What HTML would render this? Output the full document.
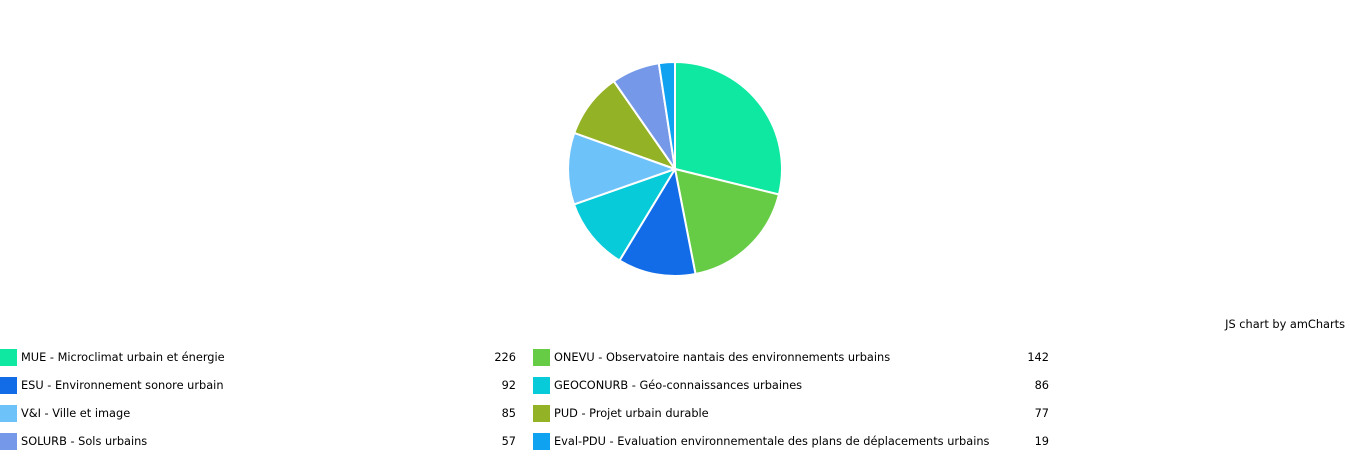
<!DOCTYPE html>
<html><head><meta charset="utf-8"><style>
body{margin:0;width:1350px;height:470px;background:#fff;font-family:"DejaVu Sans",Verdana,sans-serif;font-size:11.35px;color:#000;position:relative;overflow:hidden}
.sw{position:absolute;width:17px;height:17px}
.t{position:absolute;white-space:nowrap;line-height:17px}
.v{position:absolute;text-align:right;width:60px;line-height:17px}
</style></head><body>
<svg width="1350" height="320" style="position:absolute;left:0;top:0">
<g stroke="#fff" stroke-width="2" stroke-linejoin="round">
<path d="M675,169 L675,62 A107,107 0 0 1 778.9,194.5 Z" fill="#0fe8a0"/>
<path d="M675,169 L778.9,194.5 A107,107 0 0 1 695.5,274 Z" fill="#67cc45"/>
<path d="M675,169 L695.5,274 A107,107 0 0 1 619.5,260.5 Z" fill="#126ce8"/>
<path d="M675,169 L619.5,260.5 A107,107 0 0 1 574,204.4 Z" fill="#07cbd8"/>
<path d="M675,169 L574,204.4 A107,107 0 0 1 574.3,132.9 Z" fill="#6ec2fa"/>
<path d="M675,169 L574.3,132.9 A107,107 0 0 1 613.8,81.2 Z" fill="#94b225"/>
<path d="M675,169 L613.8,81.2 A107,107 0 0 1 658.8,63.2 Z" fill="#7599e8"/>
<path d="M675,169 L658.8,63.2 A107,107 0 0 1 675,62 Z" fill="#0ea2f0"/>
</g></svg>
<div class="t" style="right:5px;top:316px">JS chart by amCharts</div>

<div class="sw" style="left:0;top:349px;background:#0fe8a0"></div><div class="t" style="left:21px;top:349px">MUE - Microclimat urbain et énergie</div><div class="v" style="left:456px;top:349px">226</div>
<div class="sw" style="left:533px;top:349px;background:#67cc45"></div><div class="t" style="left:554px;top:349px">ONEVU - Observatoire nantais des environnements urbains</div><div class="v" style="left:989px;top:349px">142</div>

<div class="sw" style="left:0;top:377px;background:#126ce8"></div><div class="t" style="left:21px;top:377px">ESU - Environnement sonore urbain</div><div class="v" style="left:456px;top:377px">92</div>
<div class="sw" style="left:533px;top:377px;background:#07cbd8"></div><div class="t" style="left:554px;top:377px">GEOCONURB - Géo-connaissances urbaines</div><div class="v" style="left:989px;top:377px">86</div>

<div class="sw" style="left:0;top:405px;background:#6ec2fa"></div><div class="t" style="left:21px;top:405px">V&amp;I - Ville et image</div><div class="v" style="left:456px;top:405px">85</div>
<div class="sw" style="left:533px;top:405px;background:#94b225"></div><div class="t" style="left:554px;top:405px">PUD - Projet urbain durable</div><div class="v" style="left:989px;top:405px">77</div>

<div class="sw" style="left:0;top:433px;background:#7599e8"></div><div class="t" style="left:21px;top:433px">SOLURB - Sols urbains</div><div class="v" style="left:456px;top:433px">57</div>
<div class="sw" style="left:533px;top:433px;background:#0ea2f0"></div><div class="t" style="left:554px;top:433px">Eval-PDU - Evaluation environnementale des plans de déplacements urbains</div><div class="v" style="left:989px;top:433px">19</div>
</body></html>
